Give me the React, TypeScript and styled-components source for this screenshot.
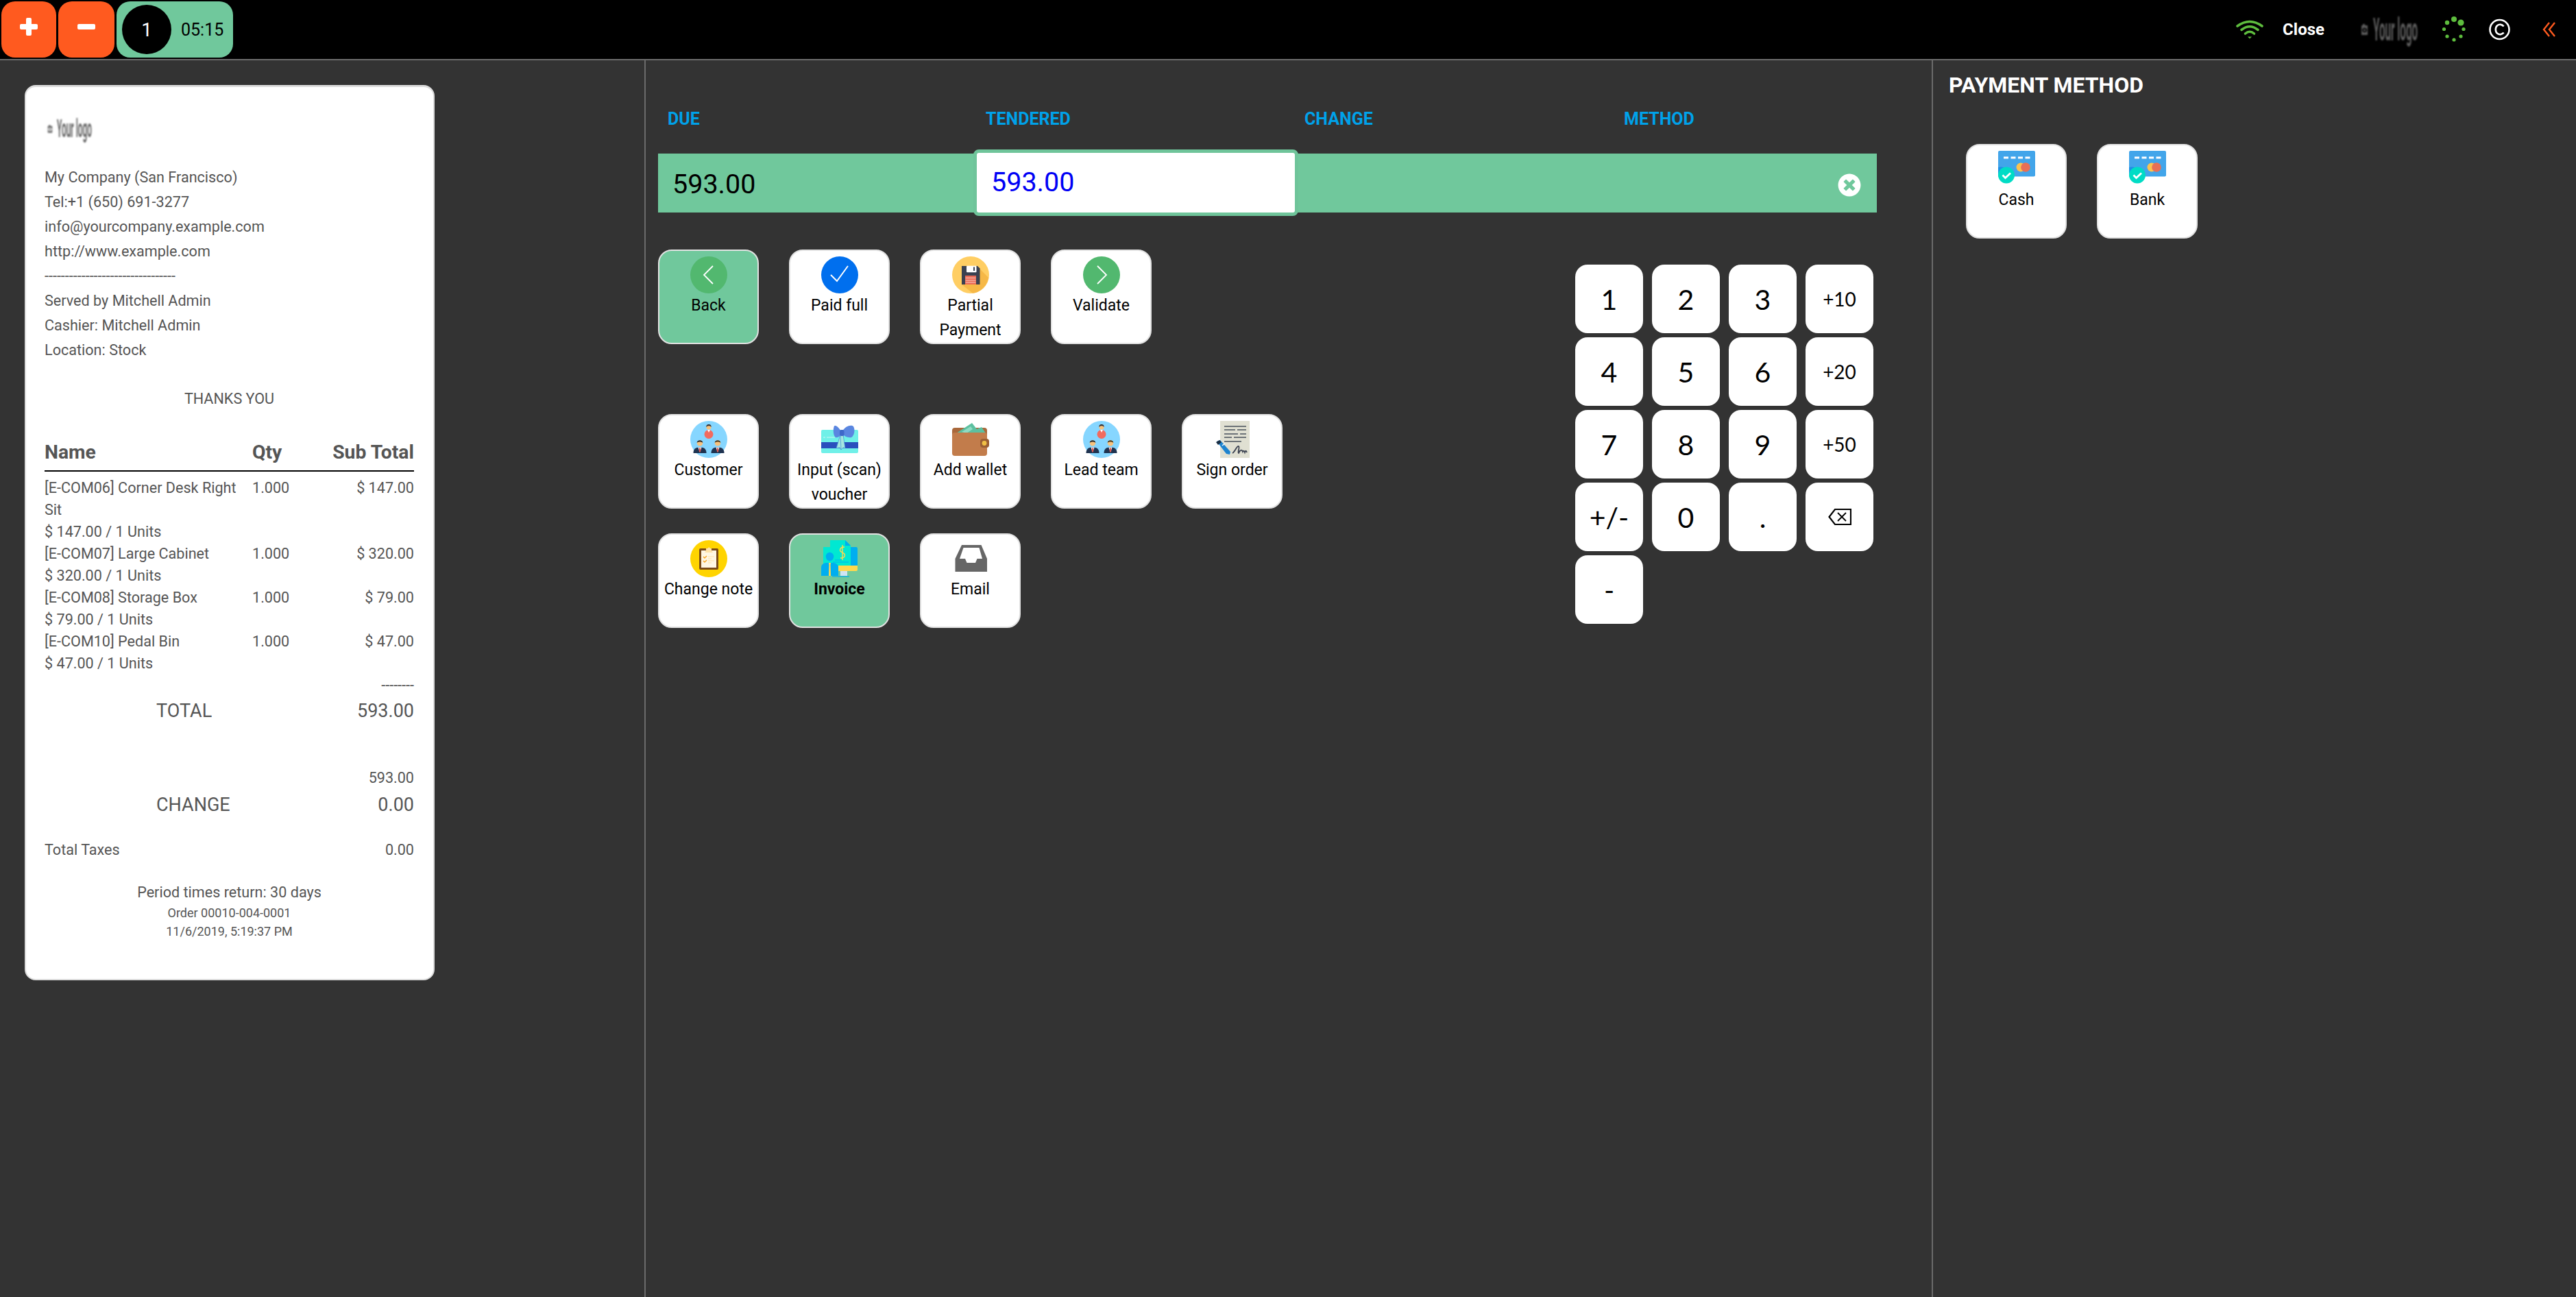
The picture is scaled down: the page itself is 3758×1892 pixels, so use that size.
import React from 'react';
import styled, { createGlobalStyle } from 'styled-components';
import { FaTimesCircle } from 'react-icons/fa';

const GREEN = '#70c89c';
const ORANGE = '#ff5a1f';

const Global = createGlobalStyle`
  html, body { margin: 0; padding: 0; background: #333; height: 1892px; overflow: hidden; }
  body { font-family: Roboto, "Liberation Sans", sans-serif; }
  * { box-sizing: border-box; }
`;

const Page = styled.div`
  width: 3758px;
  height: 1892px;
  display: flex;
  flex-direction: column;
  background: #333;
  overflow: hidden;
`;

const TopBar = styled.header`
  height: 88px;
  flex: none;
  background: #000;
  border-bottom: 2px solid #6b6b6b;
  display: flex;
  align-items: flex-start;
  padding: 2px 29px 0 2px;
`;

const OrderTools = styled.div`
  display: flex;
  gap: 3px;
`;

const SquareButton = styled.button`
  width: ${p => p.$w}px;
  height: 82px;
  border: 0;
  padding: 0 0 8px;
  border-radius: 20px;
  background: ${ORANGE};
  display: flex;
  align-items: center;
  justify-content: center;
`;

const OrderTab = styled.div`
  width: 170px;
  height: 82px;
  border-radius: 20px;
  background: ${GREEN};
  display: flex;
  align-items: center;
  padding: 0 0 0 8px;
  color: #000;
  font-size: 25px;
`;

const OrderBadge = styled.span`
  width: 72px;
  height: 72px;
  border-radius: 50%;
  background: #000;
  color: #fff;
  display: flex;
  align-items: center;
  justify-content: center;
  font-size: 28px;
  margin-right: 14px;
`;

const Status = styled.div`
  margin-left: auto;
  display: flex;
  align-items: center;
  height: 82px;
`;

const StatusSlot = styled.span`
  display: flex;
  align-items: center;
  margin-left: ${p => p.$left}px;
`;

const CloseLabel = styled.span`
  color: #fff;
  font-size: 24px;
  font-weight: 700;
`;

const Logo = styled.span`
  display: flex;
  align-items: center;
  gap: ${p => p.$gap}px;
  width: ${p => p.$w}px;
  height: ${p => p.$h}px;
  color: ${p => p.$color};
  font-size: ${p => p.$size}px;
  font-weight: 700;
  filter: blur(0.8px);
  white-space: nowrap;
  svg { flex: none; }
`;

const LogoWord = styled.span`
  display: inline-block;
  transform: scaleX(0.33);
  transform-origin: left center;
  margin-right: -2.8em;
`;

const Main = styled.main`
  flex: 1;
  display: flex;
  min-height: 0;
`;

const LeftPanel = styled.section`
  width: 940px;
  flex: none;
  padding: 36px 0 0 36px;
`;

const Receipt = styled.article`
  width: 598px;
  height: 1306px;
  background: #fff;
  border: 2px solid #dcdcdc;
  border-top-width: 3px;
  border-radius: 16px;
  padding: 25px 28px 0 27px;
  color: #555;
  font-size: 21.6px;
`;

const ReceiptLogo = styled.div`
  height: 72px;
  margin-bottom: 17px;
  padding-left: 4px;
`;

const InfoLine = styled.div`
  height: 36px;
  line-height: 36px;
  white-space: nowrap;
`;

const Thanks = styled.div`
  height: 36px;
  line-height: 36px;
  margin-top: 35px;
  text-align: center;
`;

const TableHead = styled.div`
  display: grid;
  grid-template-columns: 303px 1fr auto;
  margin-top: 34px;
  height: 54px;
  line-height: 52px;
  font-size: 28.3px;
  font-weight: 700;
  border-bottom: 2px solid #000;
`;

const Items = styled.div`
  margin-top: 8px;
`;

const ItemRow = styled.div`
  display: grid;
  grid-template-columns: 303px 1fr auto;
  line-height: 32px;
`;

const ItemName = styled.div`
  padding-right: 2px;
`;

const Dashes = styled.div`
  height: 32px;
  line-height: 32px;
  text-align: right;
`;

const BigRow = styled.div`
  display: flex;
  justify-content: space-between;
  height: 42px;
  line-height: 42px;
  padding-left: 163px;
  font-size: 27px;
`;

const RightAmount = styled.div`
  margin-top: 61px;
  height: 34px;
  line-height: 32px;
  text-align: right;
`;

const TaxRow = styled.div`
  display: flex;
  justify-content: space-between;
  height: 32px;
  line-height: 32px;
  margin-top: 29px;
`;

const Footer = styled.div`
  margin-top: 30px;
  text-align: center;
`;

const FooterLine = styled.div`
  line-height: ${p => (p.$small ? 27 : 32)}px;
  font-size: ${p => (p.$small ? 18 : 21.6)}px;
`;

const MiddlePanel = styled.section`
  width: 1880px;
  flex: none;
  border-left: 2px solid #6b6b6b;
  border-right: 2px solid #6b6b6b;
  padding: 0 0 0 18px;
`;

const Columns = styled.div`
  display: grid;
  grid-template-columns: 464px 465px 466px 1fr;
  width: 1778px;
`;

const Heads = styled(Columns)`
  height: 136px;
  padding-top: 34px;
  align-items: center;
  color: #00a2ea;
  font-size: 25px;
  font-weight: 700;
`;

const HeadCell = styled.div`
  padding-left: 14px;
`;

const Line = styled(Columns)`
  height: 86px;
  background: ${GREEN};
  align-items: center;
  font-size: 39.5px;
  color: #000;
`;

const DueCell = styled.div`
  padding: 0 0 2px 21px;
`;

const TenderedCell = styled.div`
  align-self: start;
  height: 97px;
  margin: -6px -5px 0 -4px;
  background: #fff;
  border: 5px solid #6fc49a;
  border-radius: 8px;
  color: #0000f5;
  display: flex;
  align-items: center;
  padding: 0 0 3px 21px;
`;

const MethodCell = styled.div`
  grid-column: 4;
  display: flex;
  justify-content: flex-end;
  align-items: center;
  padding-right: 23px;
  color: #fff;
  font-size: 34px;
  svg { display: block; }
`;

const Workspace = styled.div`
  display: grid;
  grid-template-columns: 1338px auto;
  margin-top: 54px;
`;

const Actions = styled.div`
  display: flex;
  flex-direction: column;
`;

const ActionRow = styled.div`
  display: grid;
  grid-template-columns: repeat(5, 147px);
  column-gap: 44px;
  margin-top: ${p => p.$top}px;
`;

const Tile = styled.button`
  height: 138px;
  padding: 8px 0 0;
  border: 2px solid #e2e2e2;
  border-radius: 20px;
  background: ${p => (p.$active ? GREEN : '#fff')};
  color: #000;
  font-family: inherit;
  font-size: 23px;
  font-weight: ${p => (p.$bold ? 700 : 400)};
  line-height: 36px;
  display: flex;
  flex-direction: column;
  align-items: center;
  text-align: center;
  svg { flex: none; display: block; }
`;

const Numpad = styled.div`
  display: grid;
  grid-template-columns: repeat(4, 99px);
  grid-auto-rows: 100px;
  column-gap: 13px;
  row-gap: 6px;
  margin-top: 22px;
  align-self: start;
`;

const Key = styled.button`
  border: 0;
  border-radius: 18px;
  background: #fff;
  color: #000;
  font-family: Lato, "Noto Sans", sans-serif;
  font-size: ${p => (p.$small ? 28 : 41)}px;
  display: flex;
  align-items: center;
  justify-content: center;
  padding: 0;
`;

const RightPanel = styled.section`
  flex: 1;
  padding: 0 0 0 23px;
`;

const PanelTitle = styled.h2`
  margin: 0;
  height: 72px;
  line-height: 72px;
  color: #fff;
  font-size: 32px;
  font-weight: 700;
  white-space: nowrap;
`;

const MethodRow = styled.div`
  display: grid;
  grid-template-columns: 147px 147px;
  column-gap: 44px;
  margin: 50px 0 0 25px;
`;

/* ---------- drawings ---------- */

const Camera = ({ w, h }: { w: number; h: number }) => (
  <svg width={w} height={h} viewBox="0 0 11 18" fill="currentColor">
    <path d="M1 3h2V1h3v2h4v14H1zM5.500 6.500a3.500 3.500 0 1 0 .01 0z" fillRule="evenodd" />
    <circle cx="5.500" cy="10" r="1.600" />
  </svg>
);

const Wifi = () => (
  <svg width="40" height="30" viewBox="0 0 40 30" fill="none" stroke="#5ebd3e" strokeWidth="3.6" strokeLinecap="round">
    <path d="M2 10Q20 -3 38 10" />
    <path d="M8 15.500Q20 6 32 15.500" />
    <path d="M13.500 21Q20 15.500 26.500 21" />
    <path d="M17 25.500h6l-3 3z" fill="#5ebd3e" stroke="none" />
  </svg>
);

const Spinner = () => {
  const dots: [number, number, number][] = [
    [18, 4, 4], [28, 9, 4.6], [32, 18.5, 2.6], [28, 29, 2.6],
    [18, 34, 2.6], [8, 29, 2.6], [3.5, 18.5, 2.6], [8, 9, 3.2],
  ];
  return (
    <svg width="36" height="38" viewBox="0 0 36 38" fill="#5ebd3e">
      {dots.map(([x, y, r]) => <circle key={x + '-' + y} cx={x} cy={y} r={r} />)}
    </svg>
  );
};

const Copyright = () => (
  <svg width="31" height="32" viewBox="0 0 31 32" fill="none" stroke="#fff">
    <circle cx="15.500" cy="16" r="14" strokeWidth="2.6" />
    <path d="M21.500 11.500C19.500 8.600 15 7.900 12.200 10.200C9 12.800 9 19.200 12.200 21.800C15 24.100 19.500 23.400 21.500 20.500" strokeWidth="2.6" />
  </svg>
);

const Chevrons = () => (
  <svg width="20" height="22" viewBox="0 0 20 22" fill="none" stroke={ORANGE} strokeWidth="2.4">
    <path d="M10 1L2 11l8 10" />
    <path d="M18 1L10 11l8 10" />
  </svg>
);

const Person = ({ x, y, hair }: { x: number; y: number; hair: string }) => (
  <g transform={`translate(${x} ${y})`}>
    <path d="M-9.500 14C-9.500 8 -6.500 5.500 0 5.500S9.500 8 9.500 14z" fill="#1f3350" />
    <path d="M-2.600 5.500h5.200L0 13z" fill="#fff" />
    <path d="M-1 6.500h2L1.300 11 0 13 -1.300 11z" fill="#e2574c" />
    <circle cx="0" cy="-0.600" r="4.200" fill="#f6c27e" />
    <path d="M-4.300 -1C-4.300 -6 4.300 -6 4.300 -1C2.500 -3 -2.500 -3 -4.300 -1z" fill={hair} />
  </g>
);

const PeopleIcon = () => (
  <svg width="54" height="54" viewBox="0 0 54 54">
    <circle cx="27" cy="27" r="27" fill="#86d6ff" />
    <circle cx="27" cy="19.500" r="6.500" fill="#f26a5e" />
    <path d="M25 13h4l-2 4z" fill="#fff" />
    <circle cx="27" cy="9" r="3.600" fill="#f6c27e" />
    <path d="M23.400 9C22.500 3.500 31.500 3.500 30.600 9C29 6.500 25 6.500 23.400 9z" fill="#33343a" />
    <Person x={14} y={33} hair="#2b2b2b" />
    <Person x={40} y={33} hair="#4a3b22" />
  </svg>
);

const ChevronCircle = ({ dir }: { dir: 'left' | 'right' }) => (
  <svg width="54" height="54" viewBox="0 0 54 54">
    <circle cx="27" cy="27" r="27" fill="#52b86f" />
    <path d={dir === 'left' ? 'M33 14L20 27l13 13' : 'M21 14l13 13-13 13'} fill="none" stroke="#fff" strokeWidth="1.8" />
  </svg>
);

const CheckCircle = () => (
  <svg width="54" height="54" viewBox="0 0 54 54">
    <circle cx="27" cy="27" r="27" fill="#006fee" />
    <path d="M14 27l9 9L39 14" fill="none" stroke="#fff" strokeWidth="2" />
  </svg>
);

const FloppyIcon = () => (
  <svg width="54" height="54" viewBox="0 0 54 54">
    <circle cx="27" cy="27" r="27" fill="#ffce63" />
    <path d="M36 13.700L53 31A27 27 0 0 1 30 53.800L14 41z" fill="#f6b846" />
    <path d="M14 14h23l3.500 3.500V41H14z" fill="#3a4150" />
    <rect x="21" y="13.700" width="14.500" height="9.500" rx="1" fill="#fff" />
    <rect x="31" y="15.500" width="2" height="5.500" fill="#3a4150" />
    <rect x="19" y="28" width="16" height="13" fill="#ea6a55" />
    <path d="M19.500 31.500h15M19.500 35h15M19.500 38h15" stroke="#f9c9c0" strokeWidth="1.100" />
  </svg>
);

const VoucherIcon = () => (
  <svg width="54" height="54" viewBox="0 0 54 54">
    <rect x="0" y="13" width="54" height="34" rx="2" fill="#70f0e8" />
    <rect x="0" y="31" width="54" height="9" fill="#2a4fbd" />
    <path d="M3 24h3M8 24h12" stroke="#c7f8f5" strokeWidth="1.200" />
    <path d="M28 20L22 40l5-1 2 3 3-20z" fill="#a6e6e0" stroke="#3f8ed8" strokeWidth="0.700" />
    <path d="M32 20l3 20-3-1-3 3-1-22z" fill="#a6e6e0" stroke="#3f8ed8" strokeWidth="0.700" />
    <path d="M29 15C24 7 19 5 18.500 9C17 14 18 22 21 24C25 25 29 21 30 18z" fill="#5a86e0" />
    <path d="M31 15C35 7 44 5 47 8C50 13 48 22 44 24C39 25 33 22 30 18z" fill="#5a86e0" />
    <rect x="27" y="13" width="6.500" height="9" rx="2.500" fill="#3e68c9" />
  </svg>
);

const WalletIcon = () => (
  <svg width="54" height="54" viewBox="0 0 54 54">
    <rect x="0" y="10" width="51" height="20" rx="4" fill="#a9683b" />
    <path d="M6 18L29 3l7 9 7-3 6 9z" fill="#5cc0a0" />
    <path d="M14 16l13-8 3 4-9 6z" fill="#8edbc3" />
    <rect x="0" y="17" width="51" height="34" rx="4" fill="#c27c4b" />
    <rect x="41" y="26" width="13" height="13" rx="4" fill="#9a5e34" />
    <circle cx="47" cy="32.500" r="3.400" fill="#f0bf45" />
  </svg>
);

const SignIcon = () => (
  <svg width="54" height="54" viewBox="0 0 54 54">
    <rect x="9" y="0" width="43" height="54" fill="#e0e0d2" />
    <path d="M15 8h32M15 13h16M34 13h13M15 19h20M38 19h9M15 24h11M29 24h18M15 30h25" stroke="#6d7478" strokeWidth="1.800" />
    <path d="M4 30l5 -2 15 17 -1 4 -5 -1z" fill="#1d83cf" />
    <path d="M3 31l5 -3 3 3 -5 4z" fill="#1c2f44" />
    <path d="M12 36l4-3" stroke="#fff" strokeWidth="1.400" />
    <path d="M27 47C31 45 33 36 36 37C38 39 34 46 36 47C39 41 41 42 42 45C43 43 44 43 45 46C46 43 47 43 48 46" fill="none" stroke="#3a4150" strokeWidth="1.800" />
  </svg>
);

const NoteIcon = () => (
  <svg width="54" height="54" viewBox="0 0 54 54">
    <circle cx="27" cy="27" r="27" fill="#ffd400" />
    <rect x="13" y="12" width="28" height="31" rx="2" fill="#7a4a18" />
    <rect x="16" y="15" width="22" height="25" fill="#fff6e3" />
    <path d="M23 15v-3h2.500a1.800 1.800 0 0 1 3.500 0H31v3l2 3H21z" fill="#ffe2a8" />
    <path d="M19 24l2 2 3-3M19 30l2 2 3-3" fill="none" stroke="#f7a21b" strokeWidth="1.400" />
    <path d="M26 24h9M26 27h5M26 30h9M26 33h5" stroke="#ffe2a8" strokeWidth="1.200" />
  </svg>
);

const InvoiceIcon = () => (
  <svg width="54" height="54" viewBox="0 0 54 54">
    <path d="M43 10h8a2 2 0 0 1 2 2v26H40z" fill="#00aeef" />
    <path d="M13 0h22l8 8v30H13z" fill="#00e8d2" />
    <path d="M35 0l8 8h-8z" fill="#00aeef" />
    <path d="M3 10h30v28H3z" fill="#00e8d2" />
    <path d="M34 10C30 10 27.500 11 27.500 14.500C27.500 19 34.500 17 34.500 22C34.500 25 32 26 28 26M31 7v22" fill="none" stroke="#ffd84d" strokeWidth="1.400" />
    <path d="M20 29h10M17 32h23" stroke="#00aeef" strokeWidth="1" />
    <path d="M25 37h28v6a2 2 0 0 1-2 2H25z" fill="#ffd84d" />
    <path d="M28 45h10v7H28z" fill="#cfe4f4" />
    <path d="M16 53h25" stroke="#00aeef" strokeWidth="1.200" />
    <ellipse cx="12.500" cy="24" rx="5.800" ry="6.200" fill="#00aeef" />
    <path d="M0 52V40C0 35 4 33 8 33h9C22 33 25 36 25 40v12z" fill="#00aeef" />
    <path d="M11 33h3l-.5 3L14 52h-3l.5-16z" fill="#ffd84d" />
  </svg>
);

const InboxIcon = () => (
  <svg width="54" height="54" viewBox="0 0 54 54">
    <path fillRule="evenodd" fill="#666" d="M14 7H42.500L51 27V46H4.500V27zM16.500 11L11 27H19L21.500 33H34L36.500 27H44L39.500 11z" />
  </svg>
);

const CardIcon = () => (
  <svg width="54" height="54" viewBox="0 0 54 54">
    <rect x="0" y="0" width="54" height="37.500" rx="2" fill="#42a5ea" />
    <path d="M8 10h7M18.500 10h7M29 10h7M39.500 10h7" stroke="#fff" strokeWidth="2.800" />
    <circle cx="33" cy="24" r="6.500" fill="#fcc24f" />
    <circle cx="40" cy="24" r="6.800" fill="#e86f56" />
    <path d="M0 24a14 14 0 0 1 18 13.500H0z" fill="#1c8fe6" />
    <circle cx="12" cy="35.500" r="12" fill="#00dcc5" />
    <path d="M6.500 35.500l4 4 7.500-7" fill="none" stroke="#fff" strokeWidth="2.800" />
  </svg>
);

const Backspace = () => (
  <svg width="34" height="26" viewBox="0 0 34 26" fill="none" stroke="#000" strokeWidth="2.200">
    <path d="M10 2H33V24H10L1.500 13z" />
    <path d="M14 7l12 12M26 7L14 19" strokeWidth="1.800" />
  </svg>
);

const PlusMark = () => (
  <svg width="26" height="26" viewBox="0 0 26 26" fill="#fff">
    <rect x="9" y="0" width="8" height="26" rx="2" />
    <rect x="0" y="9" width="26" height="8" rx="2" />
  </svg>
);

const MinusMark = () => (
  <svg width="26" height="8" viewBox="0 0 26 8" fill="#fff">
    <rect x="0" y="0" width="26" height="8" rx="2" />
  </svg>
);

/* ---------- data ---------- */

const items = [
  { name: '[E-COM06] Corner Desk Right Sit', unit: '$ 147.00 / 1 Units', sub: '$ 147.00' },
  { name: '[E-COM07] Large Cabinet', unit: '$ 320.00 / 1 Units', sub: '$ 320.00' },
  { name: '[E-COM08] Storage Box', unit: '$ 79.00 / 1 Units', sub: '$ 79.00' },
  { name: '[E-COM10] Pedal Bin', unit: '$ 47.00 / 1 Units', sub: '$ 47.00' },
];

const infoLines = [
  'My Company (San Francisco)',
  'Tel:+1 (650) 691-3277',
  'info@yourcompany.example.com',
  'http://www.example.com',
  '--------------------------------',
  'Served by Mitchell Admin',
  'Cashier: Mitchell Admin',
  'Location: Stock',
];

const rows = [
  {
    top: 0,
    tiles: [
      { label: 'Back', icon: <ChevronCircle dir="left" />, active: true },
      { label: 'Paid full', icon: <CheckCircle /> },
      { label: 'Partial Payment', icon: <FloppyIcon /> },
      { label: 'Validate', icon: <ChevronCircle dir="right" /> },
    ],
  },
  {
    top: 102,
    tiles: [
      { label: 'Customer', icon: <PeopleIcon /> },
      { label: 'Input (scan) voucher', icon: <VoucherIcon /> },
      { label: 'Add wallet', icon: <WalletIcon /> },
      { label: 'Lead team', icon: <PeopleIcon /> },
      { label: 'Sign order', icon: <SignIcon /> },
    ],
  },
  {
    top: 36,
    tiles: [
      { label: 'Change note', icon: <NoteIcon /> },
      { label: 'Invoice', icon: <InvoiceIcon />, active: true, bold: true },
      { label: 'Email', icon: <InboxIcon /> },
    ],
  },
];

const keys = ['1', '2', '3', '+10', '4', '5', '6', '+20', '7', '8', '9', '+50', '+/-', '0', '.', 'back', '-'];

export default function App() {
  return (
    <Page>
      <Global />
      <TopBar>
        <OrderTools>
          <SquareButton $w={80}><PlusMark /></SquareButton>
          <SquareButton $w={82}><MinusMark /></SquareButton>
          <OrderTab>
            <OrderBadge>1</OrderBadge>
            05:15
          </OrderTab>
        </OrderTools>
        <Status>
          <StatusSlot $left={0}><Wifi /></StatusSlot>
          <StatusSlot $left={28}><CloseLabel>Close</CloseLabel></StatusSlot>
          <StatusSlot $left={53}>
            <Logo $w={84} $h={46} $size={46} $gap={7} $color="#5c5c5c">
              <Camera w={11} h={26} />
              <LogoWord>Your logo</LogoWord>
            </Logo>
          </StatusSlot>
          <StatusSlot $left={34}><Spinner /></StatusSlot>
          <StatusSlot $left={33}><Copyright /></StatusSlot>
          <StatusSlot $left={47}><Chevrons /></StatusSlot>
        </Status>
      </TopBar>
      <Main>
        <LeftPanel>
          <Receipt>
            <ReceiptLogo>
              <Logo $w={68} $h={72} $size={36} $gap={6} $color="#666">
                <Camera w={8} h={20} />
                <LogoWord>Your logo</LogoWord>
              </Logo>
            </ReceiptLogo>
            {infoLines.map(l => <InfoLine key={l}>{l}</InfoLine>)}
            <Thanks>THANKS YOU</Thanks>
            <TableHead>
              <div>Name</div>
              <div>Qty</div>
              <div>Sub Total</div>
            </TableHead>
            <Items>
              {items.map(it => (
                <ItemRow key={it.name}>
                  <ItemName>{it.name}<br />{it.unit}</ItemName>
                  <div>1.000</div>
                  <div>{it.sub}</div>
                </ItemRow>
              ))}
            </Items>
            <Dashes>--------</Dashes>
            <BigRow><span>TOTAL</span><span>593.00</span></BigRow>
            <RightAmount>593.00</RightAmount>
            <BigRow><span>CHANGE</span><span>0.00</span></BigRow>
            <TaxRow><span>Total Taxes</span><span>0.00</span></TaxRow>
            <Footer>
              <FooterLine>Period times return: 30 days</FooterLine>
              <FooterLine $small>Order 00010-004-0001</FooterLine>
              <FooterLine $small>11/6/2019, 5:19:37 PM</FooterLine>
            </Footer>
          </Receipt>
        </LeftPanel>
        <MiddlePanel>
          <Heads>
            <HeadCell>DUE</HeadCell>
            <HeadCell>TENDERED</HeadCell>
            <HeadCell>CHANGE</HeadCell>
            <HeadCell>METHOD</HeadCell>
          </Heads>
          <Line>
            <DueCell>593.00</DueCell>
            <TenderedCell>593.00</TenderedCell>
            <MethodCell><FaTimesCircle size={34} /></MethodCell>
          </Line>
          <Workspace>
            <Actions>
              {rows.map(r => (
                <ActionRow key={r.top} $top={r.top}>
                  {r.tiles.map(t => (
                    <Tile key={t.label} $active={t.active} $bold={t.bold}>
                      {t.icon}
                      {t.label}
                    </Tile>
                  ))}
                </ActionRow>
              ))}
            </Actions>
            <Numpad>
              {keys.map(k => (
                <Key key={k} $small={k.startsWith('+1') || k.startsWith('+2') || k.startsWith('+5')}>
                  {k === 'back' ? <Backspace /> : k}
                </Key>
              ))}
            </Numpad>
          </Workspace>
        </MiddlePanel>
        <RightPanel>
          <PanelTitle>PAYMENT METHOD</PanelTitle>
          <MethodRow>
            <Tile><CardIcon />Cash</Tile>
            <Tile><CardIcon />Bank</Tile>
          </MethodRow>
        </RightPanel>
      </Main>
    </Page>
  );
}
